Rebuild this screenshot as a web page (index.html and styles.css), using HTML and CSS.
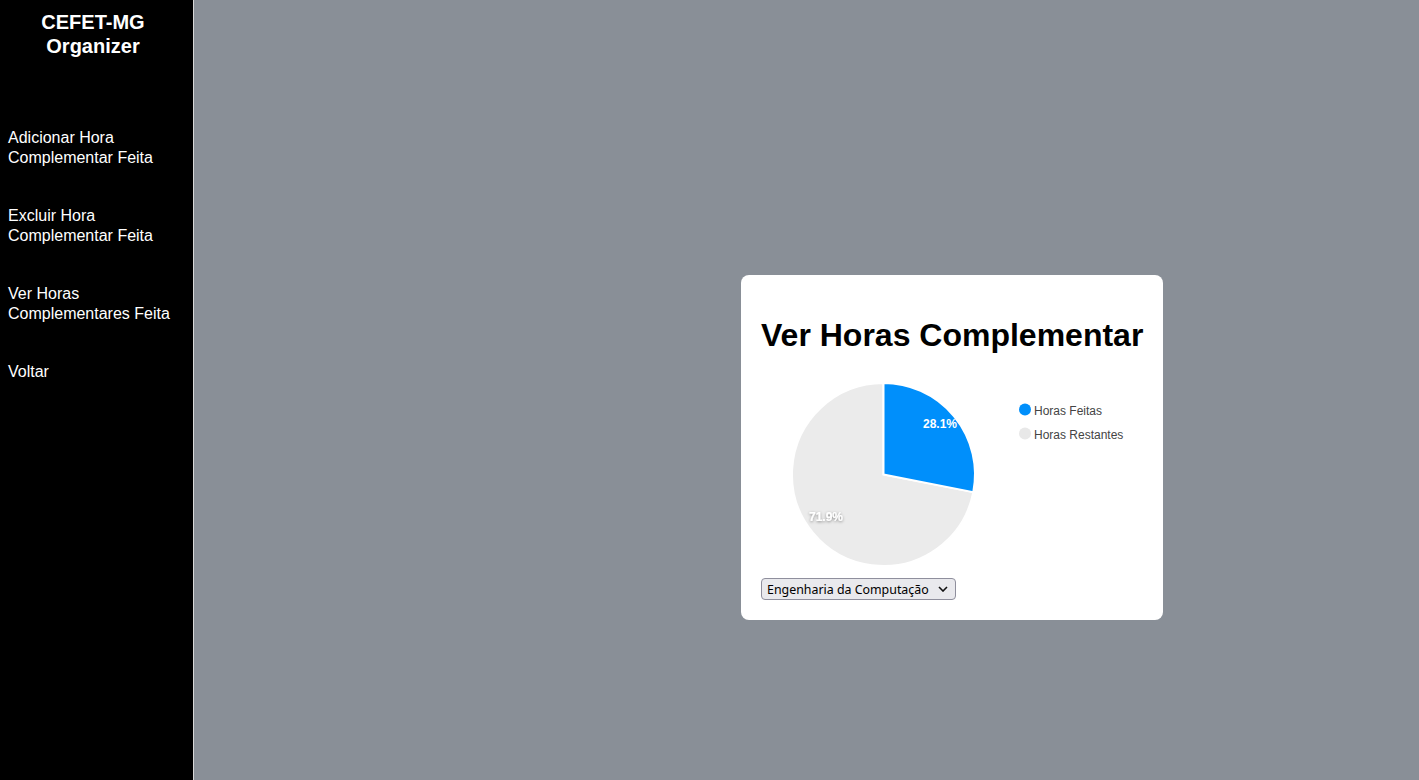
FILE: index.html
```html
<!DOCTYPE html>
<html lang="pt-BR">
<head>
<meta charset="utf-8">
<title>CEFET-MG Organizer</title>
<link rel="stylesheet" href="styles.css">
</head>
<body>
<div class="layout">
  <aside class="sidebar">
    <div class="brand">CEFET-MG<br>Organizer</div>
    <nav class="menu">
      <a href="#" class="menu-item">Adicionar Hora Complementar Feita</a>
      <a href="#" class="menu-item">Excluir Hora Complementar Feita</a>
      <a href="#" class="menu-item">Ver Horas Complementares Feita</a>
      <a href="#" class="menu-item">Voltar</a>
    </nav>
  </aside>
  <main class="main">
    <section class="card">
      <h1 class="card-title">Ver Horas Complementar</h1>
      <svg class="chart" width="382" height="204" viewBox="0 0 382 204">
        <defs>
          <filter id="shadow" x="-30%" y="-60%" width="160%" height="220%">
            <feDropShadow dx="0" dy="1" stdDeviation="1.5" flood-color="#000" flood-opacity="0.45"/>
          </filter>
        </defs>
        <path d="M122.5,100.5 L212.28,118.11 A91.5,91.5 0 1 1 122.5,9 Z" fill="#ebebeb" stroke="#fff" stroke-width="2"/>
        <path d="M122.5,100.5 L122.5,9 A91.5,91.5 0 0 1 212.28,118.11 Z" fill="#008ffb" stroke="#fff" stroke-width="2"/>
        <text x="179" y="54" class="slice-label" text-anchor="middle">28.1%</text>
        <text x="65" y="147" class="slice-label" text-anchor="middle" filter="url(#shadow)">71.9%</text>
        <circle cx="264" cy="35.5" r="6" fill="#008ffb"/>
        <text x="273" y="41" class="legend-label">Horas Feitas</text>
        <circle cx="264" cy="59.5" r="6" fill="#e8e8e8"/>
        <text x="273" y="65" class="legend-label">Horas Restantes</text>
      </svg>
      <div class="select-wrap">
        <select class="course">
          <option>Engenharia da Computação</option>
        </select>
        <svg class="chevron" width="10" height="6" viewBox="0 0 10 6"><path d="M1 1 L5 5 L9 1" fill="none" stroke="#111" stroke-width="1.6"/></svg>
      </div>
    </section>
  </main>
</div>
</body>
</html>
```
FILE: styles.css
```css
html, body {
  margin: 0;
  padding: 0;
  height: 100%;
}
body {
  font-family: "Liberation Sans", Arial, sans-serif;
  background: #898f97;
}
.layout {
  display: flex;
  min-height: 100vh;
}
.sidebar {
  width: 193px;
  flex: 0 0 193px;
  background: #000;
  border-right: 1px solid #d8d8d8;
  color: #fff;
  display: flex;
  flex-direction: column;
}
.brand {
  padding: 10px 7px 0 0;
  font-size: 20px;
  font-weight: bold;
  line-height: 24px;
  text-align: center;
}
.menu {
  display: flex;
  flex-direction: column;
  gap: 38px;
  padding: 70px 8px 0 8px;
}
.menu-item {
  color: #fff;
  text-decoration: none;
  font-size: 16px;
  line-height: 20px;
}
.main {
  flex: 1;
  display: flex;
  align-items: flex-start;
  padding: 275px 0 0 547px;
}
.card {
  background: #fff;
  border-radius: 8px;
  padding: 20px;
  display: flex;
  flex-direction: column;
  align-items: flex-start;
}
.card-title {
  margin: 22px 0 20px;
  font-size: 32px;
  line-height: 37px;
  font-weight: bold;
  color: #000;
}
.chart {
  display: block;
}
.slice-label {
  font-family: "Liberation Sans", Arial, sans-serif;
  font-size: 12px;
  font-weight: bold;
  fill: #fff;
}
.legend-label {
  font-family: "Liberation Sans", Arial, sans-serif;
  font-size: 12px;
  fill: #444;
}
.select-wrap {
  position: relative;
  display: flex;
}
.course {
  appearance: none;
  -webkit-appearance: none;
  font-family: "Noto Sans", "Open Sans", sans-serif;
  font-size: 12.4px;
  color: #000;
  height: 22px;
  width: 195px;
  padding: 1px 18px 0 5px;
  margin: 0;
  background: #e9e9ed;
  border: 1px solid #8f8f9d;
  border-radius: 4px;
  line-height: 20px;
}
.chevron {
  position: absolute;
  right: 8px;
  top: 8px;
  pointer-events: none;
}
```
